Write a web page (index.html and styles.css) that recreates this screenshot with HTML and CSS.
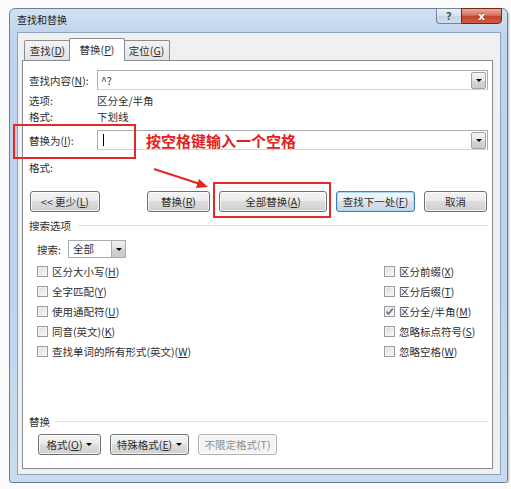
FILE: index.html
```html
<!DOCTYPE html>
<html lang="zh-CN">
<head>
    <meta charset="UTF-8">
    <title>查找和替换</title>
    <link rel="stylesheet" href="styles.css">
</head>
<body>
    <div class="window">
        <div class="titlebar">
            <span class="title">查找和替换</span>
            <div class="caption">
                <span class="help">?</span>
                <span class="close">x</span>
            </div>
        </div>

        <div class="client">
            <div class="tabs">
                <div class="tab">查找(<u>D</u>)</div>
                <div class="tab active">替换(<u>P</u>)</div>
                <div class="tab">定位(<u>G</u>)</div>
            </div>

            <div class="panel">
                <div class="field">
                    <span class="field-label">查找内容(<u>N</u>):</span>
                    <div class="combo">
                        <span class="combo-text">^?</span>
                        <span class="combo-btn"><i class="arrow"></i></span>
                    </div>
                </div>
                <div class="info first">
                    <span class="field-label">选项:</span>
                    <span>区分全/半角</span>
                </div>
                <div class="info">
                    <span class="field-label">格式:</span>
                    <span>下划线</span>
                </div>

                <div class="field replace">
                    <span class="field-label">替换为(<u>I</u>):</span>
                    <div class="combo">
                        <span class="caret"></span>
                        <span class="combo-text"></span>
                        <span class="combo-btn"><i class="arrow"></i></span>
                    </div>
                </div>
                <div class="info after">
                    <span class="field-label">格式:</span>
                </div>

                <div class="buttons">
                    <button class="btn w70">&lt;&lt; 更少(<u>L</u>)</button>
                    <div class="btn-group">
                        <button class="btn w63">替换(<u>R</u>)</button>
                        <button class="btn w108">全部替换(<u>A</u>)</button>
                        <button class="btn w79 default">查找下一处(<u>F</u>)</button>
                        <button class="btn w63">取消</button>
                    </div>
                </div>

                <div class="group-title">搜索选项</div>
                <div class="search-row">
                    <span class="search-label">搜索:</span>
                    <div class="select">
                        <span class="select-text">全部</span>
                        <span class="select-btn"><i class="arrow"></i></span>
                    </div>
                </div>

                <div class="options">
                    <label class="check"><span class="box"></span>区分大小写(<u>H</u>)</label>
                    <label class="check"><span class="box"></span>全字匹配(<u>Y</u>)</label>
                    <label class="check"><span class="box"></span>使用通配符(<u>U</u>)</label>
                    <label class="check"><span class="box"></span>同音(英文)(<u>K</u>)</label>
                    <label class="check"><span class="box"></span>查找单词的所有形式(英文)(<u>W</u>)</label>
                    <label class="check"><span class="box"></span>区分前缀(<u>X</u>)</label>
                    <label class="check"><span class="box"></span>区分后缀(<u>T</u>)</label>
                    <label class="check"><span class="box checked"><svg width="9" height="9" viewBox="0 0 9 9"><path d="M1.5 4.5 L3.6 7 L7.8 1.5" fill="none" stroke="#5a6d90" stroke-width="1.5"/></svg></span>区分全/半角(<u>M</u>)</label>
                    <label class="check"><span class="box"></span>忽略标点符号(<u>S</u>)</label>
                    <label class="check"><span class="box"></span>忽略空格(<u>W</u>)</label>
                </div>

                <div class="replace-group">
                    <div class="group-title short">替换</div>
                    <div class="bottom-buttons">
                        <button class="btn w63">格式(<u>O</u>) <i class="arrow small"></i></button>
                        <button class="btn w79">特殊格式(<u>E</u>) <i class="arrow small"></i></button>
                        <button class="btn w79" disabled>不限定格式(T)</button>
                    </div>
                </div>
            </div>
        </div>
    </div>

    <!-- annotations drawn over the screenshot -->
    <div class="mark mark-field"></div>
    <div class="note">按空格键输入一个空格</div>
    <svg class="pointer" width="70" height="34" viewBox="0 0 70 34">
        <line x1="6" y1="6" x2="52" y2="21" stroke="#e52622" stroke-width="2"/>
        <polygon points="60,24 51,16 48,25" fill="#e52622"/>
    </svg>
    <div class="mark mark-button"></div>
</body>
</html>
```

FILE: styles.css
```css
body {
    margin: 0;
    background-color: #fbfbfb;
    font-family: "Noto Sans CJK SC", "Microsoft YaHei", sans-serif;
    font-size: 10.5px;
    color: #2e2e2e;
}
u {
    text-decoration: underline;
}
.window {
    margin: 8px 0 0 9px;
    width: 499px;
    height: 475px;
    box-sizing: border-box;
    border: 1px solid #6a819e;
    border-radius: 6px 6px 3px 3px;
    background: linear-gradient(180deg, #d2e1f3 0, #c0d5ed 24px, #bfd4ec 60%, #c9dbef 100%);
    box-shadow: 1px 1px 2px rgba(0, 0, 0, 0.25);
    display: flex;
    flex-direction: column;
}
.titlebar {
    height: 23px;
    padding-left: 7px;
    display: flex;
    justify-content: space-between;
    align-items: flex-start;
}
.title {
    font-size: 10px;
    line-height: 22px;
    color: #1a1a1a;
}
.caption {
    display: flex;
    margin: -1px 5px 0 0;
}
.help,
.close {
    height: 16px;
    box-sizing: border-box;
    display: flex;
    align-items: center;
    justify-content: center;
    font-family: "DejaVu Sans", sans-serif;
}
.help {
    width: 25px;
    border: 1px solid #73849b;
    border-right: none;
    border-radius: 0 0 0 4px;
    background: linear-gradient(180deg, #e9eff7 0%, #d6e1ee 50%, #c5d4e6 51%, #d3dfed 100%);
    color: #4c5a6e;
    font-size: 10px;
    font-weight: bold;
}
.close {
    width: 41px;
    border: 1px solid #6b2a1f;
    border-radius: 0 0 4px 0;
    background: linear-gradient(180deg, #e9a998 0%, #d9735e 45%, #c2432a 50%, #d25c41 100%);
    color: #fff;
    font-size: 11px;
    font-weight: bold;
    text-shadow: 0 0 2px #6b2a1f;
}
.client {
    flex: 1;
    margin: 0 6px 7px 7px;
    border: 1px solid #8ea3bd;
    background-color: #f0f0f0;
    padding: 5px 7px 5px 4px;
    display: flex;
    flex-direction: column;
}
.tabs {
    height: 22px;
    padding-left: 2px;
    display: flex;
    align-items: flex-end;
    position: relative;
    z-index: 1;
}
.tab {
    width: 47px;
    height: 20px;
    box-sizing: border-box;
    border: 1px solid #898c95;
    border-bottom: none;
    border-radius: 2px 2px 0 0;
    background: linear-gradient(180deg, #f4f4f4, #e3e3e3);
    text-align: center;
    line-height: 19px;
}
.tab.active {
    width: 56px;
    height: 23px;
    margin: 0 -2px -1px;
    background: #fff;
    line-height: 21px;
    position: relative;
}
.panel {
    flex: 1;
    background-color: #fff;
    border: 1px solid #898c95;
    padding: 9px 4px 13px 6px;
    display: flex;
    flex-direction: column;
}
.field {
    height: 20px;
    display: flex;
    align-items: center;
}
.field.replace {
    margin-top: 6px;
}
.field-label {
    width: 68px;
    flex-shrink: 0;
}
.combo {
    flex: 1;
    height: 20px;
    box-sizing: border-box;
    border: 1px solid #abadb3;
    border-bottom-color: #d0d3d9;
    display: flex;
    align-items: center;
}
.combo-text {
    flex: 1;
    padding-left: 3px;
}
.combo-btn {
    width: 15px;
    height: 17px;
    margin-right: 1px;
    box-sizing: border-box;
    border: 1px solid #a2a2a2;
    border-radius: 2px;
    background: linear-gradient(180deg, #f5f5f5 0%, #e6e6e6 50%, #d6d6d6 51%, #cbcbcb 100%);
    display: flex;
    align-items: center;
    justify-content: center;
}
.arrow {
    width: 0;
    height: 0;
    border-left: 3px solid transparent;
    border-right: 3px solid transparent;
    border-top: 3px solid #000;
}
.arrow.small {
    display: inline-block;
    margin-left: 4px;
    vertical-align: middle;
}
.caret {
    width: 1px;
    height: 12px;
    margin-left: 5px;
    background-color: #000;
}
.info {
    height: 16px;
    display: flex;
    align-items: center;
}
.info.first {
    margin-top: 2px;
}
.info.after {
    margin-top: 9px;
}
.buttons {
    margin-top: 16px;
    padding: 0 1px;
    display: flex;
}
.btn-group {
    margin-left: auto;
    display: flex;
    gap: 9px;
}
.btn {
    height: 21px;
    box-sizing: border-box;
    padding: 0;
    border: 1px solid #707070;
    border-radius: 3px;
    background: linear-gradient(180deg, #f3f3f3 0%, #ebebeb 48%, #dddddd 50%, #cfcfcf 100%);
    box-shadow: inset 0 0 0 1px rgba(255, 255, 255, 0.7);
    font: inherit;
    color: inherit;
    display: flex;
    align-items: center;
    justify-content: center;
}
.btn.default {
    border-color: #3c7fb1;
    box-shadow: inset 0 0 0 1px #a9d8f3;
    background: linear-gradient(180deg, #f2f7fa 0%, #e8eef2 48%, #d9e2e8 50%, #ccd7de 100%);
}
.btn:disabled {
    border-color: #adb2b5;
    background: #f4f4f4;
    color: #8c8c8c;
}
.w63 { width: 63px; }
.w70 { width: 70px; }
.w79 { width: 79px; }
.w108 { width: 108px; }
.group-title {
    height: 16px;
    margin-top: 5px;
    display: flex;
    align-items: center;
}
.group-title::after {
    content: "";
    flex: 1;
    margin-left: 7px;
    border-top: 1px solid #d9e0e6;
}
.group-title.short::after {
    margin-left: 5px;
}
.search-row {
    height: 18px;
    margin-top: 7px;
    padding-left: 8px;
    display: flex;
    align-items: center;
}
.search-label {
    width: 31px;
}
.select {
    width: 58px;
    height: 18px;
    box-sizing: border-box;
    border: 1px solid #a5acb5;
    display: flex;
}
.select-text {
    flex: 1;
    padding-left: 4px;
    line-height: 16px;
}
.select-btn {
    width: 13px;
    border-left: 1px solid #a5acb5;
    background: linear-gradient(180deg, #f0f0f0 0%, #e2e2e2 50%, #d3d3d3 51%, #c8c8c8 100%);
    display: flex;
    align-items: center;
    justify-content: center;
}
.options {
    margin-top: 3px;
    padding-left: 8px;
    display: grid;
    grid-template-columns: 347px 1fr;
    grid-template-rows: repeat(5, 20px);
    grid-auto-flow: column;
}
.check {
    display: flex;
    align-items: center;
    white-space: nowrap;
}
.box {
    width: 11px;
    height: 11px;
    margin-right: 4px;
    box-sizing: border-box;
    border: 1px solid #9a9a9a;
    background: linear-gradient(135deg, #dedede, #f8f8f8);
    box-shadow: inset 0 0 0 1px #f4f4f4;
    display: flex;
    align-items: center;
    justify-content: center;
}
.replace-group {
    margin-top: auto;
}
.bottom-buttons {
    margin-top: 5px;
    padding-left: 9px;
    display: flex;
    gap: 9px;
}
.mark {
    position: absolute;
    box-sizing: border-box;
    border: 2px solid #e32a28;
}
.mark-field {
    left: 13px;
    top: 124px;
    width: 123px;
    height: 35px;
}
.mark-button {
    left: 213px;
    top: 182px;
    width: 118px;
    height: 36px;
}
.note {
    position: absolute;
    left: 146px;
    top: 130px;
    font-size: 15px;
    font-weight: bold;
    line-height: 22px;
    color: #e3221c;
}
.pointer {
    position: absolute;
    left: 148px;
    top: 163px;
}
```
